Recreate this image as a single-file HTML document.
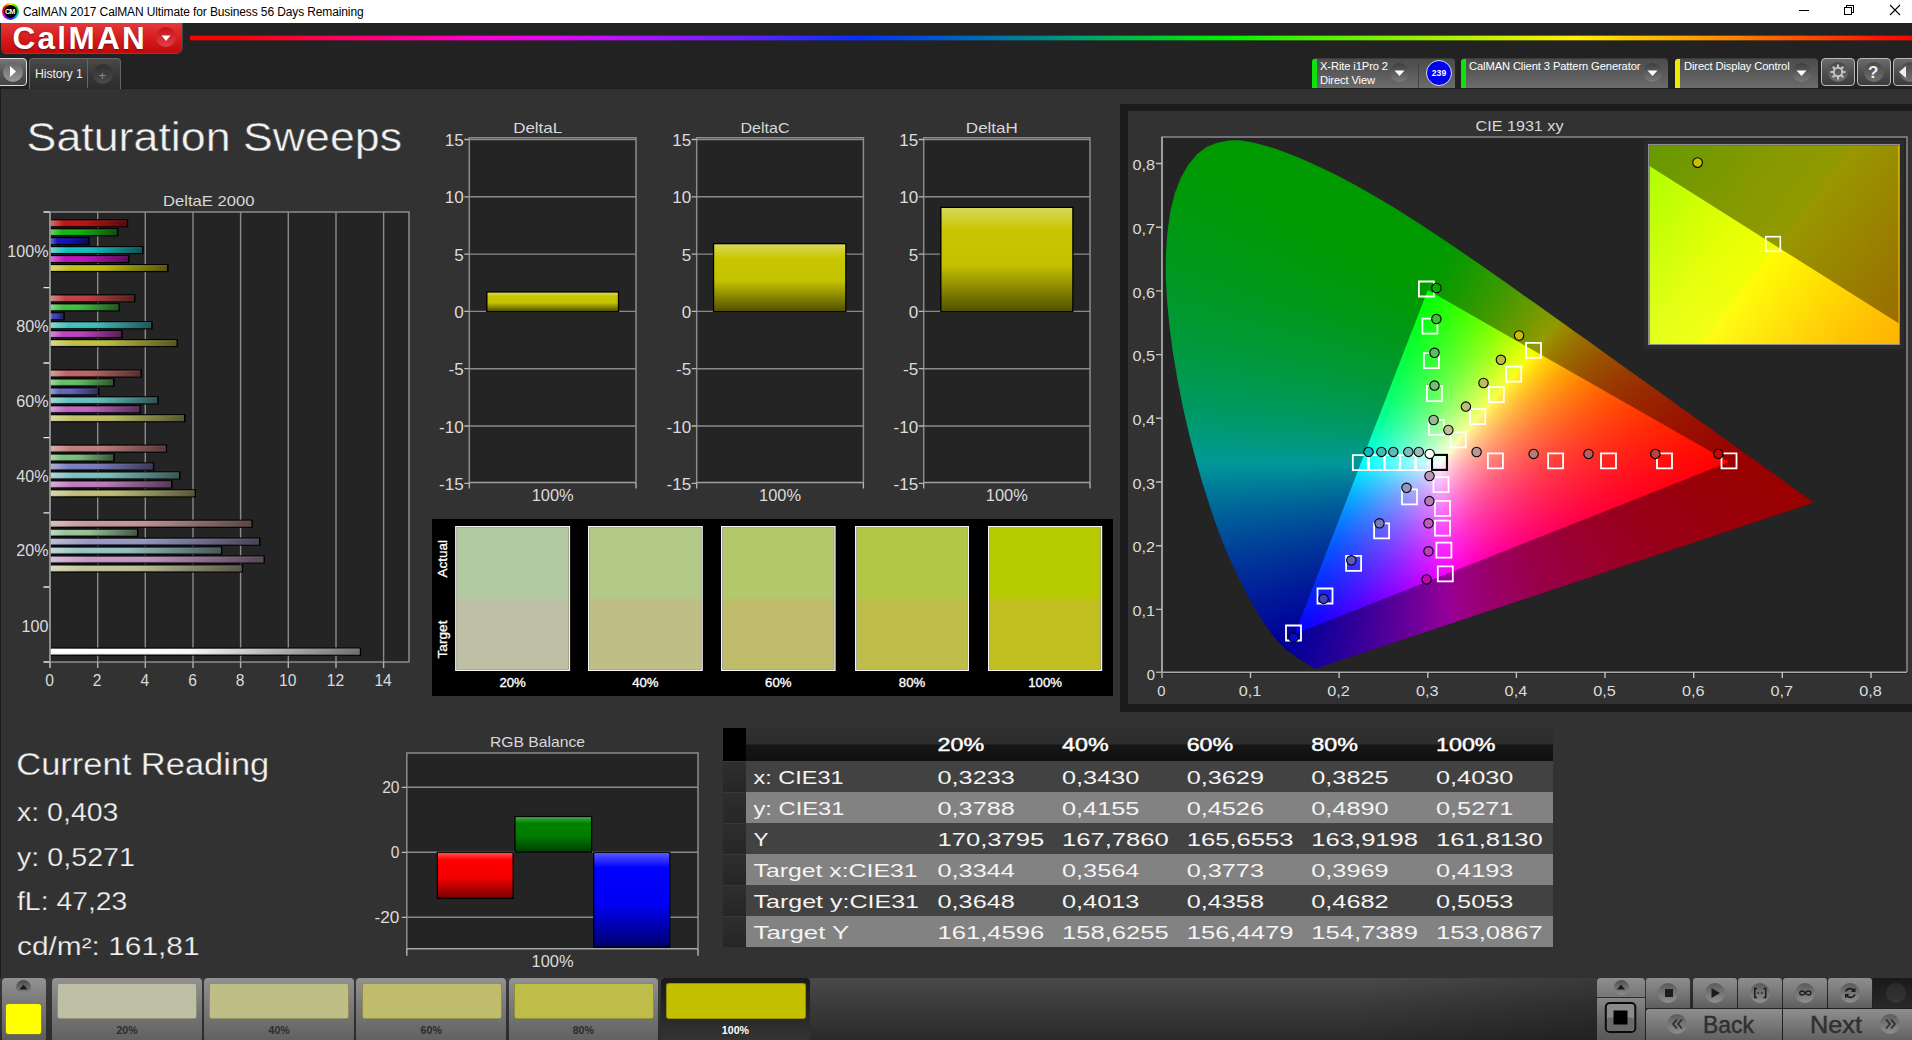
<!DOCTYPE html><html><head><meta charset="utf-8"><title>CalMAN</title><style>
*{box-sizing:border-box;margin:0;padding:0}
html,body{width:1912px;height:1040px;overflow:hidden;background:#323232;font-family:"Liberation Sans",sans-serif;color:#e4e4e4}
.abs{position:absolute}
#titlebar{position:absolute;left:0;top:0;width:1912px;height:23px;background:#fff;color:#000;font-size:12px}
#toolbar{position:absolute;left:0;top:23px;width:1912px;height:66px;background:#222;border-bottom:1px solid #1d1d1d}
#main{position:absolute;left:0;top:89px;width:1912px;height:889px;background:#323232;border-left:1px solid #1c1c1c}
#bottom{position:absolute;left:0;top:978px;width:1912px;height:62px;background:#1e1e1e}
svg{position:absolute;left:0;top:0;overflow:visible}
svg text{font-family:"Liberation Sans",sans-serif}
.t{position:absolute;white-space:nowrap;line-height:1}
</style></head><body>
<div id="titlebar"></div><div id="toolbar"></div><div id="main"></div><div id="bottom"></div>
<!-- p_top -->
<div class="abs" style="left:2px;top:3px;width:17px;height:17px;border-radius:50%;background:conic-gradient(#ff0,#0c0,#0cc,#22f,#c0c,#f00,#ff0)"></div>
<div class="abs" style="left:4px;top:5px;width:13px;height:13px;border-radius:50%;background:#000"></div>
<div class="t" style="left:5px;top:8px;font-size:7px;font-weight:bold;color:#fff;letter-spacing:-0.5px">CM</div>
<div class="t" style="left:23px;top:6px;font-size:12px;color:#000;letter-spacing:-0.12px">CalMAN 2017 CalMAN Ultimate for Business 56 Days Remaining</div>
<svg width="1912" height="23"><g stroke="#000" stroke-width="1" fill="none" shape-rendering="crispEdges">
<path d="M1799 10.5H1809"/><path d="M1844.5 7.5H1851.5V14.5H1844.5Z"/><path d="M1846.5 7.5V5.5H1853.5V12.5H1851.5"/></g>
<g stroke="#000" stroke-width="1.1" fill="none"><path d="M1890 5L1900 15M1900 5L1890 15"/></g></svg>
<div class="abs" style="left:1px;top:23px;width:181px;height:30px;border-radius:0 0 5px 5px;background:linear-gradient(#e23a3c,#d61a1c 55%,#c00a0c);box-shadow:0 1px 0 #555, 1px 0 0 #444"></div>
<div class="t" style="left:12.5px;top:23px;font-size:31.5px;font-weight:bold;color:#fff;letter-spacing:2.3px;text-shadow:0 1px 2px rgba(0,0,0,.4)">CalMAN</div>
<div class="abs" style="left:156px;top:27px;width:20px;height:20px;border-radius:50%;background:linear-gradient(#c8101a,#e04046)"></div>
<svg width="200" height="60"><path d="M161.5 35.5H170.5L166 41Z" fill="#fff"/></svg>
<div class="abs" style="left:190px;top:35px;width:1722px;height:6px;background:linear-gradient(90deg,#ff0000 0,#ff0000 40px,#ff0078 180px,#ff00d8 300px,#c010ff 420px,#6020ff 560px,#0030ff 670px,#0060c0 770px,#008a8a 855px,#00c040 950px,#00f000 1035px,#60f000 1150px,#c0f000 1290px,#fff000 1385px,#ffb000 1480px,#ff6000 1590px,#ff1000 1700px,#ff0000 1722px)"></div>
<div class="abs" style="left:190px;top:35px;width:1722px;height:6px;background:linear-gradient(#222 0,rgba(34,34,34,0) 1.5px,rgba(34,34,34,0) 4.5px,#222 6px)"></div>
<div class="abs" style="left:-3px;top:58px;width:30px;height:28px;border-radius:4px;border:1px solid #ddd;background:linear-gradient(#777,#555 50%,#444)"></div>
<div class="abs" style="left:3px;top:62px;width:20px;height:20px;border-radius:50%;background:linear-gradient(#666,#999)"></div>
<svg width="60" height="100"><path d="M10 66V77L16 71.5Z" fill="#fff"/></svg>
<div class="abs" style="left:29px;top:58px;width:92px;height:31px;border-radius:4px 4px 0 0;border:1px solid #666;border-bottom:none;background:linear-gradient(#4a4a4a,#353535 60%,#2c2c2c)"></div>
<div class="abs" style="left:86.5px;top:59px;width:1px;height:29px;background:#666"></div>
<div class="t" style="left:35px;top:68px;font-size:12.3px;color:#eee;letter-spacing:-0.1px">History 1</div>
<div class="abs" style="left:93px;top:64px;width:20px;height:20px;border-radius:50%;background:linear-gradient(#303030,#4a4a4a)"></div>
<div class="t" style="left:98.5px;top:68.5px;font-size:13px;color:#888">+</div>
<div class="abs" style="left:1311.6px;top:58px;width:143.4px;height:30px;border-radius:4px 4px 0 0;background:linear-gradient(#4c4c4c,#5a5a5a 50%,#6c6c6c);border-top:1px solid #3c3c3c"></div><div class="abs" style="left:1311.6px;top:59px;width:5px;height:29px;border-radius:3px 0 0 0;background:#0ce40c"></div><div class="t" style="left:1320px;top:61px;font-size:11.2px;color:#fff;letter-spacing:-0.12px">X-Rite i1Pro 2</div><div class="t" style="left:1320px;top:75px;font-size:11.2px;color:#fff;letter-spacing:-0.12px">Direct View</div><div class="abs" style="left:1390px;top:63px;width:19px;height:19px;border-radius:50%;background:linear-gradient(#3e3e3e,#7a7a7a)"></div><svg width="1912" height="100"><path d="M1394.5 70.5H1404.5L1399.5 76Z" fill="#fff"/></svg>
<div class="abs" style="left:1418px;top:61px;width:1px;height:27px;background:#444"></div>
<div class="abs" style="left:1426px;top:60px;width:26px;height:26px;border-radius:50%;background:#0000f0;border:1px solid #ddd"></div><div class="t" style="left:1431px;top:69px;font-size:8.6px;font-weight:bold;color:#fff;width:16px;text-align:center">239</div>
<div class="abs" style="left:1460.6px;top:58px;width:207.6px;height:30px;border-radius:4px 4px 0 0;background:linear-gradient(#4c4c4c,#5a5a5a 50%,#6c6c6c);border-top:1px solid #3c3c3c"></div><div class="abs" style="left:1460.6px;top:59px;width:5px;height:29px;border-radius:3px 0 0 0;background:#0ce40c"></div><div class="t" style="left:1469px;top:61px;font-size:11.2px;color:#fff;letter-spacing:-0.12px">CalMAN Client 3 Pattern Generator</div><div class="abs" style="left:1643px;top:63px;width:19px;height:19px;border-radius:50%;background:linear-gradient(#3e3e3e,#7a7a7a)"></div><svg width="1912" height="100"><path d="M1647.5 70.5H1657.5L1652.5 76Z" fill="#fff"/></svg>
<div class="abs" style="left:1675.0px;top:58px;width:143.0px;height:30px;border-radius:4px 4px 0 0;background:linear-gradient(#4c4c4c,#5a5a5a 50%,#6c6c6c);border-top:1px solid #3c3c3c"></div><div class="abs" style="left:1675.0px;top:59px;width:5px;height:29px;border-radius:3px 0 0 0;background:#ecec00"></div><div class="t" style="left:1684px;top:61px;font-size:11.2px;color:#fff;letter-spacing:-0.12px">Direct Display Control</div><div class="abs" style="left:1792px;top:63px;width:19px;height:19px;border-radius:50%;background:linear-gradient(#3e3e3e,#7a7a7a)"></div><svg width="1912" height="100"><path d="M1796.5 70.5H1806.5L1801.5 76Z" fill="#fff"/></svg>
<div class="abs" style="left:1821px;top:58px;width:34px;height:28px;border-radius:4px;border:1px solid #bbb;background:linear-gradient(#6c6c6c,#505050 50%,#3c3c3c)"></div>
<div class="abs" style="left:1828px;top:62px;width:20px;height:20px;border-radius:50%;background:linear-gradient(#484848,#707070)"></div>
<div class="abs" style="left:1857px;top:58px;width:34px;height:28px;border-radius:4px;border:1px solid #bbb;background:linear-gradient(#6c6c6c,#505050 50%,#3c3c3c)"></div>
<div class="abs" style="left:1864px;top:62px;width:20px;height:20px;border-radius:50%;background:linear-gradient(#484848,#707070)"></div>
<div class="abs" style="left:1893px;top:58px;width:34px;height:28px;border-radius:4px;border:1px solid #bbb;background:linear-gradient(#6c6c6c,#505050 50%,#3c3c3c)"></div>
<div class="abs" style="left:1900px;top:62px;width:20px;height:20px;border-radius:50%;background:linear-gradient(#484848,#707070)"></div>
<svg width="1912" height="100"><g transform="translate(1838,72)"><circle r="4.2" fill="none" stroke="#c6c6c6" stroke-width="1.9"/><g stroke="#c6c6c6" stroke-width="2.1">
<path d="M0 -7.5V-4.5M0 7.5V4.5M-7.500 0H-4.5M7.5 0H4.5M-5.3 -5.3L-3.2 -3.2M5.3 5.3L3.2 3.2M-5.3 5.3L-3.2 3.2M5.3 -5.3L3.2 -3.2"/></g></g>
<path d="M1906 66V78L1899 72Z" fill="#eee"/></svg>
<div class="t" style="left:1868px;top:64px;font-size:17px;font-weight:bold;color:#eee">?</div>
<!-- p_deltae -->
<svg width="1912" height="1040">
<defs><linearGradient id="bg" x1="0" x2="1" y1="0" y2="0"><stop offset="0" stop-color="#fff" stop-opacity=".38"/><stop offset=".18" stop-color="#fff" stop-opacity="0"/><stop offset=".45" stop-color="#000" stop-opacity=".03"/><stop offset="1" stop-color="#000" stop-opacity=".56"/></linearGradient>
<linearGradient id="bgv" x1="0" x2="0" y1="0" y2="1"><stop offset="0" stop-color="#fff" stop-opacity=".06"/><stop offset=".5" stop-color="#fff" stop-opacity="0"/><stop offset="1" stop-color="#000" stop-opacity=".1"/></linearGradient></defs>
<rect x="50.0" y="212" width="359.0" height="450" fill="#242424"/>
<path d="M97.7 212 V662 M145.3 212 V662 M193.0 212 V662 M240.6 212 V662 M288.3 212 V662 M336.0 212 V662 M383.6 212 V662" stroke="#8a8a8a" stroke-width="1.4" fill="none"/>
<path d="M50.0 212H409V662H50.0" stroke="#8c8c8c" stroke-width="1.5" fill="none"/>
<path d="M43.5 212H50.0 M43.5 287.7H50.0 M43.5 363H50.0 M43.5 437.6H50.0 M43.5 512.8H50.0 M43.5 587H50.0 M43.5 662H50.0" stroke="#e8e8e8" stroke-width="1.3" fill="none"/>
<path d="M50.0 662V668 M97.7 662V668 M145.3 662V668 M193.0 662V668 M240.6 662V668 M288.3 662V668 M336.0 662V668 M383.6 662V668" stroke="#b0b0b0" stroke-width="1.4" fill="none"/>
<rect x="50.0" y="219.20" width="78.2" height="8.2" fill="#000"/>
<rect x="50.5" y="220.40" width="76.1" height="5.8" fill="#c01010"/>
<rect x="50.5" y="220.40" width="76.1" height="5.8" fill="url(#bg)"/>
<rect x="50.5" y="220.40" width="76.1" height="5.8" fill="url(#bgv)"/>
<rect x="50.0" y="228.15" width="68.5" height="8.2" fill="#000"/>
<rect x="50.5" y="229.35" width="66.4" height="5.8" fill="#10b410"/>
<rect x="50.5" y="229.35" width="66.4" height="5.8" fill="url(#bg)"/>
<rect x="50.5" y="229.35" width="66.4" height="5.8" fill="url(#bgv)"/>
<rect x="50.0" y="237.10" width="39.8" height="8.2" fill="#000"/>
<rect x="50.5" y="238.30" width="37.7" height="5.8" fill="#1010c0"/>
<rect x="50.5" y="238.30" width="37.7" height="5.8" fill="url(#bg)"/>
<rect x="50.5" y="238.30" width="37.7" height="5.8" fill="url(#bgv)"/>
<rect x="50.0" y="246.05" width="93.5" height="8.2" fill="#000"/>
<rect x="50.5" y="247.25" width="91.4" height="5.8" fill="#10c0c0"/>
<rect x="50.5" y="247.25" width="91.4" height="5.8" fill="url(#bg)"/>
<rect x="50.5" y="247.25" width="91.4" height="5.8" fill="url(#bgv)"/>
<rect x="50.0" y="255.00" width="79.6" height="8.2" fill="#000"/>
<rect x="50.5" y="256.20" width="77.5" height="5.8" fill="#c010c0"/>
<rect x="50.5" y="256.20" width="77.5" height="5.8" fill="url(#bg)"/>
<rect x="50.5" y="256.20" width="77.5" height="5.8" fill="url(#bgv)"/>
<rect x="50.0" y="263.95" width="118.6" height="8.2" fill="#000"/>
<rect x="50.5" y="265.15" width="116.5" height="5.8" fill="#c0c010"/>
<rect x="50.5" y="265.15" width="116.5" height="5.8" fill="url(#bg)"/>
<rect x="50.5" y="265.15" width="116.5" height="5.8" fill="url(#bgv)"/>
<rect x="50.0" y="294.30" width="85.4" height="8.2" fill="#000"/>
<rect x="50.5" y="295.50" width="83.3" height="5.8" fill="#c04040"/>
<rect x="50.5" y="295.50" width="83.3" height="5.8" fill="url(#bg)"/>
<rect x="50.5" y="295.50" width="83.3" height="5.8" fill="url(#bgv)"/>
<rect x="50.0" y="303.25" width="69.9" height="8.2" fill="#000"/>
<rect x="50.5" y="304.45" width="67.8" height="5.8" fill="#40c040"/>
<rect x="50.5" y="304.45" width="67.8" height="5.8" fill="url(#bg)"/>
<rect x="50.5" y="304.45" width="67.8" height="5.8" fill="url(#bgv)"/>
<rect x="50.0" y="312.20" width="14.8" height="8.2" fill="#000"/>
<rect x="50.5" y="313.40" width="12.7" height="5.8" fill="#4040c0"/>
<rect x="50.5" y="313.40" width="12.7" height="5.8" fill="url(#bg)"/>
<rect x="50.5" y="313.40" width="12.7" height="5.8" fill="url(#bgv)"/>
<rect x="50.0" y="321.15" width="102.7" height="8.2" fill="#000"/>
<rect x="50.5" y="322.35" width="100.6" height="5.8" fill="#40c0c0"/>
<rect x="50.5" y="322.35" width="100.6" height="5.8" fill="url(#bg)"/>
<rect x="50.5" y="322.35" width="100.6" height="5.8" fill="url(#bgv)"/>
<rect x="50.0" y="330.10" width="72.7" height="8.2" fill="#000"/>
<rect x="50.5" y="331.30" width="70.6" height="5.8" fill="#c040c0"/>
<rect x="50.5" y="331.30" width="70.6" height="5.8" fill="url(#bg)"/>
<rect x="50.5" y="331.30" width="70.6" height="5.8" fill="url(#bgv)"/>
<rect x="50.0" y="339.05" width="127.9" height="8.2" fill="#000"/>
<rect x="50.5" y="340.25" width="125.8" height="5.8" fill="#c0c040"/>
<rect x="50.5" y="340.25" width="125.8" height="5.8" fill="url(#bg)"/>
<rect x="50.5" y="340.25" width="125.8" height="5.8" fill="url(#bgv)"/>
<rect x="50.0" y="369.40" width="91.8" height="8.2" fill="#000"/>
<rect x="50.5" y="370.60" width="89.7" height="5.8" fill="#c06464"/>
<rect x="50.5" y="370.60" width="89.7" height="5.8" fill="url(#bg)"/>
<rect x="50.5" y="370.60" width="89.7" height="5.8" fill="url(#bgv)"/>
<rect x="50.0" y="378.35" width="64.6" height="8.2" fill="#000"/>
<rect x="50.5" y="379.55" width="62.5" height="5.8" fill="#64c064"/>
<rect x="50.5" y="379.55" width="62.5" height="5.8" fill="url(#bg)"/>
<rect x="50.5" y="379.55" width="62.5" height="5.8" fill="url(#bgv)"/>
<rect x="50.0" y="387.30" width="49.4" height="8.2" fill="#000"/>
<rect x="50.5" y="388.50" width="47.3" height="5.8" fill="#6464c0"/>
<rect x="50.5" y="388.50" width="47.3" height="5.8" fill="url(#bg)"/>
<rect x="50.5" y="388.50" width="47.3" height="5.8" fill="url(#bgv)"/>
<rect x="50.0" y="396.25" width="108.7" height="8.2" fill="#000"/>
<rect x="50.5" y="397.45" width="106.6" height="5.8" fill="#64c0c0"/>
<rect x="50.5" y="397.45" width="106.6" height="5.8" fill="url(#bg)"/>
<rect x="50.5" y="397.45" width="106.6" height="5.8" fill="url(#bgv)"/>
<rect x="50.0" y="405.20" width="90.9" height="8.2" fill="#000"/>
<rect x="50.5" y="406.40" width="88.8" height="5.8" fill="#c064c0"/>
<rect x="50.5" y="406.40" width="88.8" height="5.8" fill="url(#bg)"/>
<rect x="50.5" y="406.40" width="88.8" height="5.8" fill="url(#bgv)"/>
<rect x="50.0" y="414.15" width="135.6" height="8.2" fill="#000"/>
<rect x="50.5" y="415.35" width="133.5" height="5.8" fill="#c0c064"/>
<rect x="50.5" y="415.35" width="133.5" height="5.8" fill="url(#bg)"/>
<rect x="50.5" y="415.35" width="133.5" height="5.8" fill="url(#bgv)"/>
<rect x="50.0" y="444.50" width="117.2" height="8.2" fill="#000"/>
<rect x="50.5" y="445.70" width="115.1" height="5.8" fill="#c07c7c"/>
<rect x="50.5" y="445.70" width="115.1" height="5.8" fill="url(#bg)"/>
<rect x="50.5" y="445.70" width="115.1" height="5.8" fill="url(#bgv)"/>
<rect x="50.0" y="453.45" width="64.7" height="8.2" fill="#000"/>
<rect x="50.5" y="454.65" width="62.6" height="5.8" fill="#7cc07c"/>
<rect x="50.5" y="454.65" width="62.6" height="5.8" fill="url(#bg)"/>
<rect x="50.5" y="454.65" width="62.6" height="5.8" fill="url(#bgv)"/>
<rect x="50.0" y="462.40" width="104.3" height="8.2" fill="#000"/>
<rect x="50.5" y="463.60" width="102.2" height="5.8" fill="#7c7cc0"/>
<rect x="50.5" y="463.60" width="102.2" height="5.8" fill="url(#bg)"/>
<rect x="50.5" y="463.60" width="102.2" height="5.8" fill="url(#bgv)"/>
<rect x="50.0" y="471.35" width="130.6" height="8.2" fill="#000"/>
<rect x="50.5" y="472.55" width="128.5" height="5.8" fill="#7cc0c0"/>
<rect x="50.5" y="472.55" width="128.5" height="5.8" fill="url(#bg)"/>
<rect x="50.5" y="472.55" width="128.5" height="5.8" fill="url(#bgv)"/>
<rect x="50.0" y="480.30" width="122.6" height="8.2" fill="#000"/>
<rect x="50.5" y="481.50" width="120.5" height="5.8" fill="#c07cc0"/>
<rect x="50.5" y="481.50" width="120.5" height="5.8" fill="url(#bg)"/>
<rect x="50.5" y="481.50" width="120.5" height="5.8" fill="url(#bgv)"/>
<rect x="50.0" y="489.25" width="146.0" height="8.2" fill="#000"/>
<rect x="50.5" y="490.45" width="143.9" height="5.8" fill="#c0c07c"/>
<rect x="50.5" y="490.45" width="143.9" height="5.8" fill="url(#bg)"/>
<rect x="50.5" y="490.45" width="143.9" height="5.8" fill="url(#bgv)"/>
<rect x="50.0" y="519.60" width="202.8" height="8.2" fill="#000"/>
<rect x="50.5" y="520.80" width="200.7" height="5.8" fill="#c49898"/>
<rect x="50.5" y="520.80" width="200.7" height="5.8" fill="url(#bg)"/>
<rect x="50.5" y="520.80" width="200.7" height="5.8" fill="url(#bgv)"/>
<rect x="50.0" y="528.55" width="88.4" height="8.2" fill="#000"/>
<rect x="50.5" y="529.75" width="86.3" height="5.8" fill="#98c498"/>
<rect x="50.5" y="529.75" width="86.3" height="5.8" fill="url(#bg)"/>
<rect x="50.5" y="529.75" width="86.3" height="5.8" fill="url(#bgv)"/>
<rect x="50.0" y="537.50" width="210.6" height="8.2" fill="#000"/>
<rect x="50.5" y="538.70" width="208.5" height="5.8" fill="#9898c4"/>
<rect x="50.5" y="538.70" width="208.5" height="5.8" fill="url(#bg)"/>
<rect x="50.5" y="538.70" width="208.5" height="5.8" fill="url(#bgv)"/>
<rect x="50.0" y="546.45" width="172.4" height="8.2" fill="#000"/>
<rect x="50.5" y="547.65" width="170.3" height="5.8" fill="#98c4c4"/>
<rect x="50.5" y="547.65" width="170.3" height="5.8" fill="url(#bg)"/>
<rect x="50.5" y="547.65" width="170.3" height="5.8" fill="url(#bgv)"/>
<rect x="50.0" y="555.40" width="214.9" height="8.2" fill="#000"/>
<rect x="50.5" y="556.60" width="212.8" height="5.8" fill="#c498c4"/>
<rect x="50.5" y="556.60" width="212.8" height="5.8" fill="url(#bg)"/>
<rect x="50.5" y="556.60" width="212.8" height="5.8" fill="url(#bgv)"/>
<rect x="50.0" y="564.35" width="193.1" height="8.2" fill="#000"/>
<rect x="50.5" y="565.55" width="191.0" height="5.8" fill="#c4c498"/>
<rect x="50.5" y="565.55" width="191.0" height="5.8" fill="url(#bg)"/>
<rect x="50.5" y="565.55" width="191.0" height="5.8" fill="url(#bgv)"/>
<rect x="50.0" y="647.50" width="311.1" height="8.2" fill="#000"/>
<rect x="50.5" y="648.70" width="309.0" height="5.8" fill="#ffffff"/>
<rect x="50.5" y="648.70" width="309.0" height="5.8" fill="url(#bg)"/>
<rect x="50.5" y="648.70" width="309.0" height="5.8" fill="url(#bgv)"/>
<path d="M50.0 212V668" stroke="#a4a4a4" stroke-width="1.6" fill="none"/>
<text x="48.50" y="256.60" font-size="15.80" text-anchor="end" fill="#dcdcdc" textLength="41.22" lengthAdjust="spacingAndGlyphs">100%</text>
<text x="48.50" y="331.60" font-size="15.80" text-anchor="end" fill="#dcdcdc" textLength="32.26" lengthAdjust="spacingAndGlyphs">80%</text>
<text x="48.50" y="406.60" font-size="15.80" text-anchor="end" fill="#dcdcdc" textLength="32.26" lengthAdjust="spacingAndGlyphs">60%</text>
<text x="48.50" y="481.60" font-size="15.80" text-anchor="end" fill="#dcdcdc" textLength="32.26" lengthAdjust="spacingAndGlyphs">40%</text>
<text x="48.50" y="556.10" font-size="15.80" text-anchor="end" fill="#dcdcdc" textLength="32.26" lengthAdjust="spacingAndGlyphs">20%</text>
<text x="48.50" y="631.60" font-size="15.80" text-anchor="end" fill="#dcdcdc" textLength="26.89" lengthAdjust="spacingAndGlyphs">100</text>
<text x="49.50" y="686.00" font-size="15.60" text-anchor="middle" fill="#dcdcdc">0</text>
<text x="97.16" y="686.00" font-size="15.60" text-anchor="middle" fill="#dcdcdc">2</text>
<text x="144.82" y="686.00" font-size="15.60" text-anchor="middle" fill="#dcdcdc">4</text>
<text x="192.48" y="686.00" font-size="15.60" text-anchor="middle" fill="#dcdcdc">6</text>
<text x="240.14" y="686.00" font-size="15.60" text-anchor="middle" fill="#dcdcdc">8</text>
<text x="287.80" y="686.00" font-size="15.60" text-anchor="middle" fill="#dcdcdc">10</text>
<text x="335.46" y="686.00" font-size="15.60" text-anchor="middle" fill="#dcdcdc">12</text>
<text x="383.12" y="686.00" font-size="15.60" text-anchor="middle" fill="#dcdcdc">14</text>
<text x="208.80" y="206.30" font-size="14.80" text-anchor="middle" fill="#d8d8d8" textLength="91.50" lengthAdjust="spacingAndGlyphs">DeltaE 2000</text>
<text x="26.60" y="151.20" font-size="40.00" text-anchor="start" fill="#f2f2f2" textLength="375.50" lengthAdjust="spacingAndGlyphs" stroke="#323232" stroke-width="0.45">Saturation Sweeps</text>
</svg>
<!-- p_delta3 -->
<svg width="1912" height="1040">
<defs><linearGradient id="yb" x1="0" x2="0" y1="0" y2="1"><stop offset="0" stop-color="#d8d858"/><stop offset=".22" stop-color="#c8c600"/><stop offset=".55" stop-color="#c4c200"/><stop offset="1" stop-color="#525000"/></linearGradient></defs>
<rect x="469.3" y="137.8" width="166.7" height="344.7" fill="#242424"/>
<path d="M469.3 139.5H636 M469.3 196.8H636 M469.3 254.1H636 M469.3 311.4H636 M469.3 368.7H636 M469.3 426.0H636" stroke="#8a8a8a" stroke-width="1.4" fill="none"/>
<path d="M469.3 482.5V137.8H636V482.5" stroke="#8c8c8c" stroke-width="1.5" fill="none"/>
<path d="M469.3 482.5H636" stroke="#a0a0a0" stroke-width="1.5" fill="none"/>
<path d="M464.3 139.5H469.3 M464.3 196.8H469.3 M464.3 254.1H469.3 M464.3 311.4H469.3 M464.3 368.7H469.3 M464.3 426.0H469.3 M464.3 483.3H469.3 M469.3 482.5V488.5 M636 482.5V488.5" stroke="#b8b8b8" stroke-width="1.3" fill="none"/>
<text x="463.80" y="146.10" font-size="15.80" text-anchor="end" fill="#dcdcdc" textLength="18.98" lengthAdjust="spacingAndGlyphs">15</text>
<text x="463.80" y="203.40" font-size="15.80" text-anchor="end" fill="#dcdcdc" textLength="18.98" lengthAdjust="spacingAndGlyphs">10</text>
<text x="463.80" y="260.70" font-size="15.80" text-anchor="end" fill="#dcdcdc" textLength="9.49" lengthAdjust="spacingAndGlyphs">5</text>
<text x="463.80" y="318.00" font-size="15.80" text-anchor="end" fill="#dcdcdc" textLength="9.49" lengthAdjust="spacingAndGlyphs">0</text>
<text x="463.80" y="375.30" font-size="15.80" text-anchor="end" fill="#dcdcdc" textLength="15.17" lengthAdjust="spacingAndGlyphs">-5</text>
<text x="463.80" y="432.60" font-size="15.80" text-anchor="end" fill="#dcdcdc" textLength="24.66" lengthAdjust="spacingAndGlyphs">-10</text>
<text x="463.80" y="489.90" font-size="15.80" text-anchor="end" fill="#dcdcdc" textLength="24.66" lengthAdjust="spacingAndGlyphs">-15</text>
<rect x="486.2" y="291.3" width="132.89999999999995" height="20.7" fill="#000"/>
<rect x="487.5" y="292.6" width="130.29999999999995" height="18.5" fill="url(#yb)"/>
<text x="537.65" y="132.50" font-size="14.80" text-anchor="middle" fill="#d8d8d8" textLength="49.00" lengthAdjust="spacingAndGlyphs">DeltaL</text>
<text x="552.65" y="500.50" font-size="15.60" text-anchor="middle" fill="#dcdcdc" textLength="42.00" lengthAdjust="spacingAndGlyphs">100%</text>
<rect x="696.7" y="137.8" width="166.69999999999993" height="344.7" fill="#242424"/>
<path d="M696.7 139.5H863.4 M696.7 196.8H863.4 M696.7 254.1H863.4 M696.7 311.4H863.4 M696.7 368.7H863.4 M696.7 426.0H863.4" stroke="#8a8a8a" stroke-width="1.4" fill="none"/>
<path d="M696.7 482.5V137.8H863.4V482.5" stroke="#8c8c8c" stroke-width="1.5" fill="none"/>
<path d="M696.7 482.5H863.4" stroke="#a0a0a0" stroke-width="1.5" fill="none"/>
<path d="M691.7 139.5H696.7 M691.7 196.8H696.7 M691.7 254.1H696.7 M691.7 311.4H696.7 M691.7 368.7H696.7 M691.7 426.0H696.7 M691.7 483.3H696.7 M696.7 482.5V488.5 M863.4 482.5V488.5" stroke="#b8b8b8" stroke-width="1.3" fill="none"/>
<text x="691.20" y="146.10" font-size="15.80" text-anchor="end" fill="#dcdcdc" textLength="18.98" lengthAdjust="spacingAndGlyphs">15</text>
<text x="691.20" y="203.40" font-size="15.80" text-anchor="end" fill="#dcdcdc" textLength="18.98" lengthAdjust="spacingAndGlyphs">10</text>
<text x="691.20" y="260.70" font-size="15.80" text-anchor="end" fill="#dcdcdc" textLength="9.49" lengthAdjust="spacingAndGlyphs">5</text>
<text x="691.20" y="318.00" font-size="15.80" text-anchor="end" fill="#dcdcdc" textLength="9.49" lengthAdjust="spacingAndGlyphs">0</text>
<text x="691.20" y="375.30" font-size="15.80" text-anchor="end" fill="#dcdcdc" textLength="15.17" lengthAdjust="spacingAndGlyphs">-5</text>
<text x="691.20" y="432.60" font-size="15.80" text-anchor="end" fill="#dcdcdc" textLength="24.66" lengthAdjust="spacingAndGlyphs">-10</text>
<text x="691.20" y="489.90" font-size="15.80" text-anchor="end" fill="#dcdcdc" textLength="24.66" lengthAdjust="spacingAndGlyphs">-15</text>
<rect x="712.9000000000001" y="243.0" width="133.6" height="69.0" fill="#000"/>
<rect x="714.2" y="244.3" width="131.0" height="66.8" fill="url(#yb)"/>
<text x="765.05" y="132.50" font-size="14.80" text-anchor="middle" fill="#d8d8d8" textLength="49.00" lengthAdjust="spacingAndGlyphs">DeltaC</text>
<text x="780.05" y="500.50" font-size="15.60" text-anchor="middle" fill="#dcdcdc" textLength="42.00" lengthAdjust="spacingAndGlyphs">100%</text>
<rect x="923.7" y="137.8" width="166.29999999999995" height="344.7" fill="#242424"/>
<path d="M923.7 139.5H1090 M923.7 196.8H1090 M923.7 254.1H1090 M923.7 311.4H1090 M923.7 368.7H1090 M923.7 426.0H1090" stroke="#8a8a8a" stroke-width="1.4" fill="none"/>
<path d="M923.7 482.5V137.8H1090V482.5" stroke="#8c8c8c" stroke-width="1.5" fill="none"/>
<path d="M923.7 482.5H1090" stroke="#a0a0a0" stroke-width="1.5" fill="none"/>
<path d="M918.7 139.5H923.7 M918.7 196.8H923.7 M918.7 254.1H923.7 M918.7 311.4H923.7 M918.7 368.7H923.7 M918.7 426.0H923.7 M918.7 483.3H923.7 M923.7 482.5V488.5 M1090 482.5V488.5" stroke="#b8b8b8" stroke-width="1.3" fill="none"/>
<text x="918.20" y="146.10" font-size="15.80" text-anchor="end" fill="#dcdcdc" textLength="18.98" lengthAdjust="spacingAndGlyphs">15</text>
<text x="918.20" y="203.40" font-size="15.80" text-anchor="end" fill="#dcdcdc" textLength="18.98" lengthAdjust="spacingAndGlyphs">10</text>
<text x="918.20" y="260.70" font-size="15.80" text-anchor="end" fill="#dcdcdc" textLength="9.49" lengthAdjust="spacingAndGlyphs">5</text>
<text x="918.20" y="318.00" font-size="15.80" text-anchor="end" fill="#dcdcdc" textLength="9.49" lengthAdjust="spacingAndGlyphs">0</text>
<text x="918.20" y="375.30" font-size="15.80" text-anchor="end" fill="#dcdcdc" textLength="15.17" lengthAdjust="spacingAndGlyphs">-5</text>
<text x="918.20" y="432.60" font-size="15.80" text-anchor="end" fill="#dcdcdc" textLength="24.66" lengthAdjust="spacingAndGlyphs">-10</text>
<text x="918.20" y="489.90" font-size="15.80" text-anchor="end" fill="#dcdcdc" textLength="24.66" lengthAdjust="spacingAndGlyphs">-15</text>
<rect x="940.2" y="206.7" width="133.30000000000004" height="105.3" fill="#000"/>
<rect x="941.5" y="208.0" width="130.70000000000005" height="103.1" fill="url(#yb)"/>
<text x="991.85" y="132.50" font-size="14.80" text-anchor="middle" fill="#d8d8d8" textLength="52.00" lengthAdjust="spacingAndGlyphs">DeltaH</text>
<text x="1006.85" y="500.50" font-size="15.60" text-anchor="middle" fill="#dcdcdc" textLength="42.00" lengthAdjust="spacingAndGlyphs">100%</text>
</svg>
<!-- p_swatch -->
<svg width="1912" height="1040">
<rect x="432" y="519" width="681" height="177" fill="#000"/>
<rect x="455.1" y="526" width="115" height="145" fill="#f4f4f4"/>
<rect x="456.3" y="527.2" width="112.6" height="142.6" fill="#9a9a88"/>
<rect x="457.1" y="528" width="111" height="71" fill="#b2c9a1"/>
<rect x="457.1" y="598.7" width="111" height="70.3" fill="#bfbfa5"/>
<text x="512.60" y="687.30" font-size="13.20" text-anchor="middle" fill="#fff" stroke="#fff" stroke-width="0.35">20%</text>
<rect x="588" y="526" width="114.8" height="145" fill="#f4f4f4"/>
<rect x="589.2" y="527.2" width="112.39999999999999" height="142.6" fill="#9a9a88"/>
<rect x="590" y="528" width="110.8" height="71" fill="#b3c988"/>
<rect x="590" y="598.7" width="110.8" height="70.3" fill="#c0be87"/>
<text x="645.40" y="687.30" font-size="13.20" text-anchor="middle" fill="#fff" stroke="#fff" stroke-width="0.35">40%</text>
<rect x="721" y="526" width="114.6" height="145" fill="#f4f4f4"/>
<rect x="722.2" y="527.2" width="112.19999999999999" height="142.6" fill="#9a9a88"/>
<rect x="723" y="528" width="110.6" height="71" fill="#b2c86a"/>
<rect x="723" y="598.7" width="110.6" height="70.3" fill="#bfbd6b"/>
<text x="778.30" y="687.30" font-size="13.20" text-anchor="middle" fill="#fff" stroke="#fff" stroke-width="0.35">60%</text>
<rect x="855" y="526" width="114" height="145" fill="#f4f4f4"/>
<rect x="856.2" y="527.2" width="111.6" height="142.6" fill="#9a9a88"/>
<rect x="857" y="528" width="110" height="71" fill="#b2c746"/>
<rect x="857" y="598.7" width="110" height="70.3" fill="#bfbd4a"/>
<text x="912.00" y="687.30" font-size="13.20" text-anchor="middle" fill="#fff" stroke="#fff" stroke-width="0.35">80%</text>
<rect x="988" y="526" width="114.2" height="145" fill="#f4f4f4"/>
<rect x="989.2" y="527.2" width="111.8" height="142.6" fill="#9a9a88"/>
<rect x="990" y="528" width="110.2" height="71" fill="#b5ca00"/>
<rect x="990" y="598.7" width="110.2" height="70.3" fill="#c1be1f"/>
<text x="1045.10" y="687.30" font-size="13.20" text-anchor="middle" fill="#fff" stroke="#fff" stroke-width="0.35">100%</text>
<text transform="translate(446.5,577.5) rotate(-90)" font-size="13" fill="#fff" stroke="#fff" stroke-width="0.3" textLength="37.5" lengthAdjust="spacingAndGlyphs">Actual</text>
<text transform="translate(446.5,658.5) rotate(-90)" font-size="13" fill="#fff" stroke="#fff" stroke-width="0.3" textLength="38" lengthAdjust="spacingAndGlyphs">Target</text>
</svg>
<!-- p_cie -->
<div class="abs" style="left:1120px;top:104px;width:792px;height:607.6px;background:#1c1c1c"></div>
<div class="abs" style="left:1128px;top:111px;width:784px;height:593px;background:#323232"></div>
<div class="abs" style="left:1162px;top:137px;width:745px;height:535px;background:#242424"></div>
<div style="position:absolute;left:1162px;top:137px;width:745px;height:536px;overflow:hidden;isolation:isolate;">
<div style="position:absolute;left:0;top:0;width:100%;height:100%;isolation:isolate"><div style="position:absolute;left:0;top:0;width:100%;height:100%;background:conic-gradient(from 0.09deg at 132.77px 497.08px,#ff0000 0.00deg,#ff0000 19.95deg,#ffff00 22.80deg,#ffff00 39.90deg,#ffcc00 42.75deg,#ffa200 45.60deg,#ff8100 48.45deg,#ff6500 51.31deg,#ff4e00 54.16deg,#ff3a00 57.01deg,#ff2900 59.86deg,#ff0c00 65.56deg,#ff0000 68.41deg,#ff0000 108.31deg)"></div><div style="position:absolute;left:0;top:0;width:100%;height:100%;mix-blend-mode:screen;background:conic-gradient(from 79.71deg at 265.75px 153.10px,#000000 0.00deg,#000000 39.53deg,#000007 43.12deg,#000021 53.90deg,#000035 61.09deg,#00004c 68.28deg,#000059 71.87deg,#000078 79.06deg,#00008b 82.65deg,#0000a1 86.25deg,#0000bc 89.84deg,#0000dc 93.43deg,#0000ff 97.03deg,#0000ff 118.59deg,#000000 122.18deg,#000000 136.56deg)"></div></div>
<div style="position:absolute;left:0;top:0;width:100%;height:100%;isolation:isolate;clip-path:polygon(278.0px 327.9px,2853.9px -2732.3px,-2259.5px -5109.1px,-3722.0px 336.7px)"><div style="position:absolute;left:0;top:0;width:100%;height:100%;background:conic-gradient(from 341.14deg at 132.77px 497.08px,#00ff00 0.00deg,#00ff00 39.06deg,#0fff00 41.66deg,#29ff00 44.27deg,#45ff00 46.87deg,#64ff00 49.48deg,#87ff00 52.08deg,#afff00 54.68deg,#ddff00 57.29deg,#ffff00 59.89deg,#ffff00 85.93deg,#00ff00 88.54deg,#00ff00 98.95deg)"></div><div style="position:absolute;left:0;top:0;width:100%;height:100%;mix-blend-mode:screen;background:conic-gradient(from 229.87deg at 567.16px 325.09px,#000000 0.00deg,#000000 17.34deg,#0000ff 20.23deg,#0000ff 37.58deg,#0000f6 40.47deg,#0000c7 43.36deg,#0000a1 46.25deg,#000082 49.14deg,#000068 52.03deg,#000051 54.92deg,#00002c 60.70deg,#00000f 66.48deg,#000002 69.37deg,#000000 72.26deg,#000000 109.84deg)"></div></div>
<div style="position:absolute;left:0;top:0;width:100%;height:100%;isolation:isolate;clip-path:polygon(278.6px 324.0px,-3721.3px 332.8px,-3818.8px 4707.0px,539.0px 4315.5px)"><div style="position:absolute;left:0;top:0;width:100%;height:100%;background:conic-gradient(from 136.27deg at 265.75px 153.10px,#ff00ff 0.00deg,#ff00ff 38.64deg,#ee00ff 41.39deg,#cd00ff 44.15deg,#ae00ff 46.91deg,#7500ff 52.43deg,#3f00ff 57.95deg,#0c00ff 63.47deg,#0000ff 66.23deg,#0000ff 104.87deg)"></div><div style="position:absolute;left:0;top:0;width:100%;height:100%;mix-blend-mode:screen;background:conic-gradient(from 208.40deg at 567.16px 325.09px,#000000 0.00deg,#000000 40.06deg,#002d00 45.40deg,#004700 48.07deg,#006300 50.74deg,#008300 53.41deg,#00a600 56.08deg,#00cf00 58.75deg,#00fe00 61.42deg,#00ff00 90.79deg,#000000 93.46deg,#000000 101.47deg)"></div></div>
</div>
<svg width="1912" height="1040">
<path d="M1161 136h747v538h-747Z M1729.2 462.1 L1427.8 290.1 L1294.8 634.1Z" fill="#000" fill-opacity=".4" fill-rule="evenodd"/>
<path d="M1161 136h747v538h-747Z M1316.7 668.3 L1316.7 668.3 L1316.6 668.4 L1316.5 668.4 L1316.3 668.4 L1316.2 668.4 L1316.0 668.4 L1315.9 668.5 L1315.7 668.5 L1315.4 668.4 L1315.1 668.4 L1314.7 668.3 L1314.3 668.3 L1314.0 668.1 L1313.7 668.0 L1313.4 667.8 L1313.0 667.6 L1312.6 667.4 L1312.1 667.1 L1311.6 666.8 L1311.0 666.4 L1310.4 666.0 L1309.7 665.6 L1308.9 665.1 L1308.1 664.6 L1307.3 664.0 L1306.3 663.4 L1305.2 662.7 L1304.0 662.0 L1302.7 661.1 L1301.2 660.2 L1299.7 659.3 L1298.0 658.2 L1296.3 657.0 L1294.3 655.7 L1292.3 654.3 L1290.1 652.6 L1287.7 650.7 L1285.3 648.7 L1282.5 646.1 L1279.4 642.9 L1276.1 639.2 L1272.4 634.7 L1268.5 629.4 L1264.2 623.4 L1259.6 616.2 L1254.5 607.8 L1249.2 598.2 L1243.3 587.0 L1237.0 574.2 L1230.2 559.9 L1223.3 543.7 L1216.4 525.4 L1209.5 505.3 L1202.6 483.6 L1195.9 459.9 L1189.2 434.5 L1183.2 408.6 L1177.9 382.1 L1173.3 355.0 L1169.7 328.5 L1167.2 302.9 L1165.8 277.9 L1165.9 254.4 L1167.4 232.4 L1170.3 211.8 L1174.7 193.6 L1180.8 178.0 L1188.3 164.7 L1196.9 154.3 L1206.5 147.0 L1217.2 142.7 L1228.3 140.4 L1239.7 140.3 L1251.7 142.3 L1263.6 145.2 L1275.6 148.8 L1287.7 153.3 L1299.5 158.1 L1311.0 163.0 L1322.3 168.2 L1333.4 173.6 L1344.4 179.2 L1355.2 185.0 L1365.9 191.0 L1376.7 197.2 L1387.4 203.6 L1398.0 210.1 L1408.6 216.8 L1419.2 223.6 L1429.8 230.5 L1440.3 237.5 L1450.9 244.6 L1461.4 251.8 L1472.0 259.0 L1482.6 266.3 L1493.2 273.7 L1503.7 281.1 L1514.2 288.5 L1524.7 295.9 L1535.2 303.3 L1545.7 310.8 L1556.1 318.2 L1566.4 325.5 L1576.7 332.9 L1586.9 340.1 L1596.9 347.3 L1606.9 354.5 L1616.7 361.5 L1626.4 368.5 L1636.0 375.3 L1645.4 382.0 L1654.6 388.6 L1663.6 395.0 L1672.3 401.3 L1680.8 407.4 L1689.0 413.3 L1696.9 418.9 L1704.3 424.3 L1711.4 429.3 L1718.2 434.2 L1724.8 438.9 L1731.1 443.4 L1737.0 447.7 L1742.6 451.6 L1747.8 455.3 L1752.6 458.7 L1757.2 462.0 L1761.4 465.0 L1765.3 467.9 L1768.9 470.5 L1772.3 472.9 L1775.4 475.1 L1778.3 477.2 L1781.0 479.1 L1783.5 480.8 L1785.8 482.5 L1787.9 484.0 L1790.0 485.5 L1791.9 486.9 L1793.7 488.2 L1795.4 489.4 L1796.9 490.5 L1798.4 491.6 L1799.8 492.6 L1801.1 493.5 L1802.3 494.3 L1803.3 495.1 L1804.3 495.7 L1805.2 496.4 L1806.0 497.0 L1806.7 497.5 L1807.4 498.0 L1808.0 498.4 L1808.5 498.7 L1808.9 499.0 L1809.5 499.5 L1810.9 500.5 L1812.5 501.7 L1813.7 502.5Z" fill="#242424" fill-rule="evenodd"/>
</svg>
<div class="abs" style="left:1644px;top:139.500px;width:260px;height:209px;background:#2b2b2b"></div>
<div class="abs" style="left:1648px;top:144px;width:252px;height:201px;background:#8e8e8e"></div>
<div style="position:absolute;left:1649.5px;top:145.5px;width:249px;height:198px;overflow:hidden;isolation:isolate;">
<div style="position:absolute;left:0;top:0;width:100%;height:100%;isolation:isolate"><div style="position:absolute;left:0;top:0;width:100%;height:100%;background:conic-gradient(from 357.25deg at -1117.24px 1731.92px,#ff0000 0.00deg,#ff0000 20.09deg,#ffff00 22.96deg,#ffff00 37.32deg,#fffb00 40.19deg,#ffc600 43.06deg,#ff9d00 45.93deg,#ff7d00 48.80deg,#ff6200 51.67deg,#ff4c00 54.54deg,#ff3900 57.41deg,#ff2800 60.28deg,#ff1900 63.15deg,#ff0c00 66.02deg,#ff0100 68.89deg,#ff0000 109.08deg)"></div><div style="position:absolute;left:0;top:0;width:100%;height:100%;mix-blend-mode:screen;background:conic-gradient(from 82.27deg at -425.59px -248.26px,#000000 0.00deg,#000000 38.89deg,#000005 42.43deg,#00001e 53.03deg,#00003c 63.64deg,#000055 70.71deg,#000064 74.25deg,#000075 77.78deg,#000089 81.32deg,#0000a0 84.85deg,#0000bd 88.39deg,#0000e0 91.93deg,#0000ff 95.46deg,#0000ff 116.68deg,#000000 120.21deg,#000000 134.35deg)"></div></div>
<div style="position:absolute;left:0;top:0;width:100%;height:100%;isolation:isolate;clip-path:polygon(-366.0px 747.6px,2055.4px -2436.2px,-3037.8px -4624.7px,-4366.0px 757.4px)"><div style="position:absolute;left:0;top:0;width:100%;height:100%;background:conic-gradient(from 339.25deg at -1117.24px 1731.92px,#00ff00 0.00deg,#00ff00 38.68deg,#0cff00 41.26deg,#27ff00 43.84deg,#45ff00 46.42deg,#66ff00 49.00deg,#8bff00 51.58deg,#b4ff00 54.16deg,#e5ff00 56.74deg,#ffff00 59.32deg,#ffff00 85.11deg,#00ff00 87.68deg,#00ff00 98.00deg)"></div><div style="position:absolute;left:0;top:0;width:100%;height:100%;mix-blend-mode:screen;background:conic-gradient(from 229.86deg at 1142.15px 741.83px,#000000 0.00deg,#000000 14.79deg,#0000ff 17.75deg,#0000ff 38.46deg,#0000e8 41.42deg,#0000bf 44.37deg,#00009d 47.33deg,#000081 50.29deg,#000068 53.25deg,#000053 56.21deg,#000040 59.16deg,#00002f 62.12deg,#000012 68.04deg,#000006 71.00deg,#000000 73.96deg,#000000 112.41deg)"></div></div>
<div style="position:absolute;left:0;top:0;width:100%;height:100%;isolation:isolate;clip-path:polygon(-365.4px 743.7px,-4365.4px 753.5px,-4476.0px 5114.4px,-130.1px 4736.8px)"><div style="position:absolute;left:0;top:0;width:100%;height:100%;background:conic-gradient(from 136.63deg at -425.59px -248.26px,#ff00ff 0.00deg,#ff00ff 37.81deg,#f800ff 40.51deg,#d400ff 43.21deg,#b200ff 45.91deg,#9200ff 48.61deg,#5700ff 54.01deg,#1f00ff 59.42deg,#0500ff 62.12deg,#0000ff 64.82deg,#0000ff 102.63deg)"></div><div style="position:absolute;left:0;top:0;width:100%;height:100%;mix-blend-mode:screen;background:conic-gradient(from 206.34deg at 1142.15px 741.83px,#000000 0.00deg,#000000 38.14deg,#000600 40.86deg,#003100 46.31deg,#006400 51.76deg,#008100 54.49deg,#00a200 57.21deg,#00c700 59.94deg,#00f000 62.66deg,#00ff00 65.38deg,#00ff00 95.35deg,#000000 98.08deg,#000000 103.52deg)"></div></div>
</div>
<svg width="1912" height="1040">
<defs><clipPath id="icl"><rect x="1649.5" y="145.5" width="249" height="198"/></clipPath></defs>
<path d="M1644.5 140.5h259v208h-259Z M2791.6 887.3 L1223.9 -102.8 L532.3 1877.4Z" fill="#000" fill-opacity=".4" fill-rule="evenodd" clip-path="url(#icl)"/>
<rect x="1765.7" y="236.7" width="14.6" height="14.6" fill="none" stroke="#fff" stroke-width="1.6"/>
<circle cx="1697.6" cy="162.6" r="4.8" fill="#c8c000" stroke="#000" stroke-width="1.1"/>
<path d="M1162 672V137H1907V672" stroke="#8c8c8c" stroke-width="1.5" fill="none"/>
<path d="M1162 137V678M1156 672.2H1907" stroke="#a8a8a8" stroke-width="1.6" fill="none"/>
<path d="M1250.5 672V678 M1156 609.4H1162 M1339.1 672V678 M1156 545.7H1162 M1427.8 672V678 M1156 482.0H1162 M1516.4 672V678 M1156 418.3H1162 M1605.0 672V678 M1156 354.6H1162 M1693.7 672V678 M1156 290.9H1162 M1782.3 672V678 M1156 227.2H1162 M1871.0 672V678 M1156 163.5H1162" stroke="#c0c0c0" stroke-width="1.4" fill="none"/>
<text x="1161.30" y="695.50" font-size="14.80" text-anchor="middle" fill="#dcdcdc">0</text>
<text x="1155.00" y="679.80" font-size="14.80" text-anchor="end" fill="#dcdcdc">0</text>
<text x="1249.95" y="695.50" font-size="14.80" text-anchor="middle" fill="#dcdcdc" textLength="22.60" lengthAdjust="spacingAndGlyphs">0,1</text>
<text x="1155.00" y="616.10" font-size="14.80" text-anchor="end" fill="#dcdcdc" textLength="22.60" lengthAdjust="spacingAndGlyphs">0,1</text>
<text x="1338.60" y="695.50" font-size="14.80" text-anchor="middle" fill="#dcdcdc" textLength="22.60" lengthAdjust="spacingAndGlyphs">0,2</text>
<text x="1155.00" y="552.40" font-size="14.80" text-anchor="end" fill="#dcdcdc" textLength="22.60" lengthAdjust="spacingAndGlyphs">0,2</text>
<text x="1427.25" y="695.50" font-size="14.80" text-anchor="middle" fill="#dcdcdc" textLength="22.60" lengthAdjust="spacingAndGlyphs">0,3</text>
<text x="1155.00" y="488.70" font-size="14.80" text-anchor="end" fill="#dcdcdc" textLength="22.60" lengthAdjust="spacingAndGlyphs">0,3</text>
<text x="1515.90" y="695.50" font-size="14.80" text-anchor="middle" fill="#dcdcdc" textLength="22.60" lengthAdjust="spacingAndGlyphs">0,4</text>
<text x="1155.00" y="425.00" font-size="14.80" text-anchor="end" fill="#dcdcdc" textLength="22.60" lengthAdjust="spacingAndGlyphs">0,4</text>
<text x="1604.55" y="695.50" font-size="14.80" text-anchor="middle" fill="#dcdcdc" textLength="22.60" lengthAdjust="spacingAndGlyphs">0,5</text>
<text x="1155.00" y="361.30" font-size="14.80" text-anchor="end" fill="#dcdcdc" textLength="22.60" lengthAdjust="spacingAndGlyphs">0,5</text>
<text x="1693.20" y="695.50" font-size="14.80" text-anchor="middle" fill="#dcdcdc" textLength="22.60" lengthAdjust="spacingAndGlyphs">0,6</text>
<text x="1155.00" y="297.60" font-size="14.80" text-anchor="end" fill="#dcdcdc" textLength="22.60" lengthAdjust="spacingAndGlyphs">0,6</text>
<text x="1781.85" y="695.50" font-size="14.80" text-anchor="middle" fill="#dcdcdc" textLength="22.60" lengthAdjust="spacingAndGlyphs">0,7</text>
<text x="1155.00" y="233.90" font-size="14.80" text-anchor="end" fill="#dcdcdc" textLength="22.60" lengthAdjust="spacingAndGlyphs">0,7</text>
<text x="1870.50" y="695.50" font-size="14.80" text-anchor="middle" fill="#dcdcdc" textLength="22.60" lengthAdjust="spacingAndGlyphs">0,8</text>
<text x="1155.00" y="170.20" font-size="14.80" text-anchor="end" fill="#dcdcdc" textLength="22.60" lengthAdjust="spacingAndGlyphs">0,8</text>
<text x="1519.50" y="131.00" font-size="14.80" text-anchor="middle" fill="#d8d8d8" textLength="88.00" lengthAdjust="spacingAndGlyphs">CIE 1931 xy</text>
<path d="M1487.9 453.4h15v15h-15ZM1548.1 453.4h15v15h-15ZM1601.0 453.4h15v15h-15ZM1657.0 453.4h15v15h-15ZM1721.5 453.4h15v15h-15ZM1428.9 419.8h15v15h-15ZM1426.9 386.1h15v15h-15ZM1423.9 353.1h15v15h-15ZM1422.4 318.6h15v15h-15ZM1418.9 281.5h15v15h-15ZM1402.0 489.3h15v15h-15ZM1374.1 523.4h15v15h-15ZM1346.1 555.9h15v15h-15ZM1317.5 588.5h15v15h-15ZM1286.0 625.5h15v15h-15ZM1416.2 455.1h15v15h-15ZM1400.3 455.1h15v15h-15ZM1384.8 455.1h15v15h-15ZM1369.0 455.1h15v15h-15ZM1352.8 455.1h15v15h-15ZM1433.5 477.2h15v15h-15ZM1435.0 500.9h15v15h-15ZM1435.0 520.6h15v15h-15ZM1436.4 542.6h15v15h-15ZM1437.8 566.3h15v15h-15ZM1450.7 432.4h15v15h-15ZM1470.2 409.2h15v15h-15ZM1488.8 387.2h15v15h-15ZM1506.2 366.6h15v15h-15ZM1526.0 342.9h15v15h-15Z" fill="none" stroke="#fff" stroke-width="1.8"/>
<rect x="1432" y="454.9" width="15" height="15" fill="none" stroke="#000" stroke-width="2.1"/>
<circle cx="1476.6" cy="452.0" r="4.7" fill="#bc9696" stroke="#000" stroke-width="1.1"/>
<circle cx="1533.6" cy="453.9" r="4.7" fill="#bc7878" stroke="#000" stroke-width="1.1"/>
<circle cx="1588.5" cy="453.9" r="4.7" fill="#bc5c5c" stroke="#000" stroke-width="1.1"/>
<circle cx="1655.4" cy="453.9" r="4.7" fill="#bc4040" stroke="#000" stroke-width="1.1"/>
<circle cx="1718.4" cy="453.9" r="4.7" fill="#c00808" stroke="#000" stroke-width="1.1"/>
<circle cx="1433.6" cy="420.0" r="4.7" fill="#96bc96" stroke="#000" stroke-width="1.1"/>
<circle cx="1434.5" cy="385.6" r="4.7" fill="#78bc78" stroke="#000" stroke-width="1.1"/>
<circle cx="1434.5" cy="352.8" r="4.7" fill="#5cbc5c" stroke="#000" stroke-width="1.1"/>
<circle cx="1436.4" cy="319.0" r="4.7" fill="#40bc40" stroke="#000" stroke-width="1.1"/>
<circle cx="1436.4" cy="288.0" r="4.7" fill="#08a808" stroke="#000" stroke-width="1.1"/>
<circle cx="1406.5" cy="487.8" r="4.7" fill="#9696bc" stroke="#000" stroke-width="1.1"/>
<circle cx="1379.5" cy="523.3" r="4.7" fill="#7878bc" stroke="#000" stroke-width="1.1"/>
<circle cx="1351.3" cy="560.3" r="4.7" fill="#5c5cbc" stroke="#000" stroke-width="1.1"/>
<circle cx="1323.6" cy="598.9" r="4.7" fill="#4040bc" stroke="#000" stroke-width="1.1"/>
<circle cx="1293.5" cy="637.3" r="4.7" fill="#0808c8" stroke="#000" stroke-width="1.1"/>
<circle cx="1418.8" cy="451.9" r="4.7" fill="#96bcbc" stroke="#000" stroke-width="1.1"/>
<circle cx="1408.3" cy="451.9" r="4.7" fill="#78bcbc" stroke="#000" stroke-width="1.1"/>
<circle cx="1393.3" cy="451.9" r="4.7" fill="#5cbcbc" stroke="#000" stroke-width="1.1"/>
<circle cx="1381.4" cy="451.9" r="4.7" fill="#40bcbc" stroke="#000" stroke-width="1.1"/>
<circle cx="1368.5" cy="451.9" r="4.7" fill="#10b8c0" stroke="#000" stroke-width="1.1"/>
<circle cx="1429.5" cy="476.0" r="4.7" fill="#bc96bc" stroke="#000" stroke-width="1.1"/>
<circle cx="1429.4" cy="501.1" r="4.7" fill="#bc78bc" stroke="#000" stroke-width="1.1"/>
<circle cx="1428.5" cy="523.3" r="4.7" fill="#bc5cbc" stroke="#000" stroke-width="1.1"/>
<circle cx="1428.5" cy="551.3" r="4.7" fill="#bc40bc" stroke="#000" stroke-width="1.1"/>
<circle cx="1426.6" cy="579.4" r="4.7" fill="#c008b0" stroke="#000" stroke-width="1.1"/>
<circle cx="1448.4" cy="430.0" r="4.7" fill="#bcbc96" stroke="#000" stroke-width="1.1"/>
<circle cx="1465.9" cy="406.6" r="4.7" fill="#bcbc78" stroke="#000" stroke-width="1.1"/>
<circle cx="1483.5" cy="383.0" r="4.7" fill="#bcbc5c" stroke="#000" stroke-width="1.1"/>
<circle cx="1500.9" cy="359.8" r="4.7" fill="#bcbc40" stroke="#000" stroke-width="1.1"/>
<circle cx="1519.1" cy="335.5" r="4.7" fill="#c8c000" stroke="#000" stroke-width="1.1"/>
<circle cx="1429.7" cy="453.9" r="4.7" fill="#fff" stroke="#000" stroke-width="1.1"/>
</svg>
<!-- p_reading -->
<svg width="1912" height="1040">
<defs>
<linearGradient id="gr" x1="0" x2="0" y1="0" y2="1"><stop offset="0" stop-color="#ff5050"/><stop offset=".16" stop-color="#ff0000"/><stop offset=".55" stop-color="#f40000"/><stop offset="1" stop-color="#780000"/></linearGradient>
<linearGradient id="gg" x1="0" x2="0" y1="0" y2="1"><stop offset="0" stop-color="#40a840"/><stop offset=".18" stop-color="#008200"/><stop offset=".55" stop-color="#007c00"/><stop offset="1" stop-color="#004000"/></linearGradient>
<linearGradient id="gb" x1="0" x2="0" y1="0" y2="1"><stop offset="0" stop-color="#5858ff"/><stop offset=".16" stop-color="#0000ff"/><stop offset=".55" stop-color="#0000f4"/><stop offset="1" stop-color="#000070"/></linearGradient></defs>
<text x="16.30" y="775.30" font-size="31.00" text-anchor="start" fill="#f2f2f2" textLength="253.00" lengthAdjust="spacingAndGlyphs" stroke="#323232" stroke-width="0.3">Current Reading</text>
<text x="17.00" y="821.30" font-size="25.60" text-anchor="start" fill="#f2f2f2" textLength="101.50" lengthAdjust="spacingAndGlyphs" stroke="#323232" stroke-width="0.25">x: 0,403</text>
<text x="17.00" y="865.80" font-size="25.60" text-anchor="start" fill="#f2f2f2" textLength="118.00" lengthAdjust="spacingAndGlyphs" stroke="#323232" stroke-width="0.25">y: 0,5271</text>
<text x="17.00" y="910.20" font-size="25.60" text-anchor="start" fill="#f2f2f2" textLength="110.30" lengthAdjust="spacingAndGlyphs" stroke="#323232" stroke-width="0.25">fL: 47,23</text>
<text x="17.00" y="954.70" font-size="25.60" text-anchor="start" fill="#f2f2f2" textLength="182.50" lengthAdjust="spacingAndGlyphs" stroke="#323232" stroke-width="0.25">cd/m²: 161,81</text>
<rect x="406.8" y="752.9" width="291.2" height="195.80000000000007" fill="#242424"/>
<path d="M406.8 787.3H698 M406.8 852.3H698 M406.8 917.3H698" stroke="#8a8a8a" stroke-width="1.4" fill="none"/>
<path d="M406.8 948.7V752.9H698V948.7" stroke="#8c8c8c" stroke-width="1.5" fill="none"/>
<path d="M406.8 948.7H698" stroke="#a8a8a8" stroke-width="1.5" fill="none"/>
<path d="M401.8 787.3H406.8 M401.8 852.3H406.8 M401.8 917.3H406.8 M406.8 948.7V955.7 M698 948.7V955.7" stroke="#c0c0c0" stroke-width="1.3" fill="none"/>
<rect x="436.7" y="851.7" width="77.0" height="47.4" fill="#000"/>
<rect x="437.9" y="852.9" width="74.6" height="44.8" fill="url(#gr)"/>
<rect x="514.4" y="815.9" width="77.8" height="37.0" fill="#000"/>
<rect x="515.6" y="817.1" width="75.4" height="34.4" fill="url(#gg)"/>
<rect x="593.1" y="851.7" width="77.3" height="96.1" fill="#000"/>
<rect x="594.3" y="852.9" width="74.9" height="93.5" fill="url(#gb)"/>
<text x="399.50" y="792.90" font-size="15.60" text-anchor="end" fill="#dcdcdc">20</text>
<text x="399.50" y="857.90" font-size="15.60" text-anchor="end" fill="#dcdcdc">0</text>
<text x="399.50" y="922.90" font-size="15.60" text-anchor="end" fill="#dcdcdc" textLength="25.00" lengthAdjust="spacingAndGlyphs">-20</text>
<text x="552.60" y="966.50" font-size="15.60" text-anchor="middle" fill="#dcdcdc" textLength="42.00" lengthAdjust="spacingAndGlyphs">100%</text>
<text x="537.50" y="747.00" font-size="14.80" text-anchor="middle" fill="#d8d8d8" textLength="95.00" lengthAdjust="spacingAndGlyphs">RGB Balance</text>
</svg>
<!-- p_table -->
<div class="abs" style="left:723px;top:728px;width:829.5px;height:33px;background:linear-gradient(#303030 0,#2c2c2c 48%,#161616 52%,#101010 100%)"></div>
<div class="abs" style="left:723px;top:760.7px;width:829.5px;height:31.3px;background:#424242"></div>
<div class="abs" style="left:723px;top:760.7px;width:23px;height:31.3px;background:linear-gradient(#2e2e2e,#262626);border-top:1px solid #383838"></div>
<div class="abs" style="left:723px;top:791.8px;width:829.5px;height:31.3px;background:#828282"></div>
<div class="abs" style="left:723px;top:791.8px;width:23px;height:31.3px;background:linear-gradient(#2e2e2e,#262626);border-top:1px solid #383838"></div>
<div class="abs" style="left:723px;top:822.8px;width:829.5px;height:31.3px;background:#424242"></div>
<div class="abs" style="left:723px;top:822.8px;width:23px;height:31.3px;background:linear-gradient(#2e2e2e,#262626);border-top:1px solid #383838"></div>
<div class="abs" style="left:723px;top:853.9px;width:829.5px;height:31.3px;background:#828282"></div>
<div class="abs" style="left:723px;top:853.9px;width:23px;height:31.3px;background:linear-gradient(#2e2e2e,#262626);border-top:1px solid #383838"></div>
<div class="abs" style="left:723px;top:884.9px;width:829.5px;height:31.3px;background:#424242"></div>
<div class="abs" style="left:723px;top:884.9px;width:23px;height:31.3px;background:linear-gradient(#2e2e2e,#262626);border-top:1px solid #383838"></div>
<div class="abs" style="left:723px;top:916.0px;width:829.5px;height:31.3px;background:#828282"></div>
<div class="abs" style="left:723px;top:916.0px;width:23px;height:31.3px;background:linear-gradient(#2e2e2e,#262626);border-top:1px solid #383838"></div>
<div class="abs" style="left:723px;top:728px;width:23px;height:33px;background:#000"></div>
<svg width="1912" height="1040">
<text x="937.50" y="751.00" font-size="17.50" text-anchor="start" fill="#fff" textLength="46.58" lengthAdjust="spacingAndGlyphs" stroke="#fff" stroke-width="0.4">20%</text>
<text x="1062.00" y="751.00" font-size="17.50" text-anchor="start" fill="#fff" textLength="46.58" lengthAdjust="spacingAndGlyphs" stroke="#fff" stroke-width="0.4">40%</text>
<text x="1186.70" y="751.00" font-size="17.50" text-anchor="start" fill="#fff" textLength="46.58" lengthAdjust="spacingAndGlyphs" stroke="#fff" stroke-width="0.4">60%</text>
<text x="1311.30" y="751.00" font-size="17.50" text-anchor="start" fill="#fff" textLength="46.58" lengthAdjust="spacingAndGlyphs" stroke="#fff" stroke-width="0.4">80%</text>
<text x="1436.00" y="751.00" font-size="17.50" text-anchor="start" fill="#fff" textLength="59.53" lengthAdjust="spacingAndGlyphs" stroke="#fff" stroke-width="0.4">100%</text>
<text x="753.50" y="783.60" font-size="17.50" text-anchor="start" fill="#f4f4f4" textLength="90.00" lengthAdjust="spacingAndGlyphs">x: CIE31</text>
<text x="937.50" y="783.60" font-size="17.50" text-anchor="start" fill="#f4f4f4" textLength="77.30" lengthAdjust="spacingAndGlyphs">0,3233</text>
<text x="1062.00" y="783.60" font-size="17.50" text-anchor="start" fill="#f4f4f4" textLength="77.30" lengthAdjust="spacingAndGlyphs">0,3430</text>
<text x="1186.70" y="783.60" font-size="17.50" text-anchor="start" fill="#f4f4f4" textLength="77.30" lengthAdjust="spacingAndGlyphs">0,3629</text>
<text x="1311.30" y="783.60" font-size="17.50" text-anchor="start" fill="#f4f4f4" textLength="77.30" lengthAdjust="spacingAndGlyphs">0,3825</text>
<text x="1436.00" y="783.60" font-size="17.50" text-anchor="start" fill="#f4f4f4" textLength="77.30" lengthAdjust="spacingAndGlyphs">0,4030</text>
<text x="753.50" y="814.65" font-size="17.50" text-anchor="start" fill="#f4f4f4" textLength="91.00" lengthAdjust="spacingAndGlyphs">y: CIE31</text>
<text x="937.50" y="814.65" font-size="17.50" text-anchor="start" fill="#f4f4f4" textLength="77.30" lengthAdjust="spacingAndGlyphs">0,3788</text>
<text x="1062.00" y="814.65" font-size="17.50" text-anchor="start" fill="#f4f4f4" textLength="77.30" lengthAdjust="spacingAndGlyphs">0,4155</text>
<text x="1186.70" y="814.65" font-size="17.50" text-anchor="start" fill="#f4f4f4" textLength="77.30" lengthAdjust="spacingAndGlyphs">0,4526</text>
<text x="1311.30" y="814.65" font-size="17.50" text-anchor="start" fill="#f4f4f4" textLength="77.30" lengthAdjust="spacingAndGlyphs">0,4890</text>
<text x="1436.00" y="814.65" font-size="17.50" text-anchor="start" fill="#f4f4f4" textLength="77.30" lengthAdjust="spacingAndGlyphs">0,5271</text>
<text x="753.50" y="845.70" font-size="17.50" text-anchor="start" fill="#f4f4f4" textLength="15.00" lengthAdjust="spacingAndGlyphs">Y</text>
<text x="937.50" y="845.70" font-size="17.50" text-anchor="start" fill="#f4f4f4" textLength="106.80" lengthAdjust="spacingAndGlyphs">170,3795</text>
<text x="1062.00" y="845.70" font-size="17.50" text-anchor="start" fill="#f4f4f4" textLength="106.80" lengthAdjust="spacingAndGlyphs">167,7860</text>
<text x="1186.70" y="845.70" font-size="17.50" text-anchor="start" fill="#f4f4f4" textLength="106.80" lengthAdjust="spacingAndGlyphs">165,6553</text>
<text x="1311.30" y="845.70" font-size="17.50" text-anchor="start" fill="#f4f4f4" textLength="106.80" lengthAdjust="spacingAndGlyphs">163,9198</text>
<text x="1436.00" y="845.70" font-size="17.50" text-anchor="start" fill="#f4f4f4" textLength="106.80" lengthAdjust="spacingAndGlyphs">161,8130</text>
<text x="753.50" y="876.75" font-size="17.50" text-anchor="start" fill="#f4f4f4" textLength="164.00" lengthAdjust="spacingAndGlyphs">Target x:CIE31</text>
<text x="937.50" y="876.75" font-size="17.50" text-anchor="start" fill="#f4f4f4" textLength="77.30" lengthAdjust="spacingAndGlyphs">0,3344</text>
<text x="1062.00" y="876.75" font-size="17.50" text-anchor="start" fill="#f4f4f4" textLength="77.30" lengthAdjust="spacingAndGlyphs">0,3564</text>
<text x="1186.70" y="876.75" font-size="17.50" text-anchor="start" fill="#f4f4f4" textLength="77.30" lengthAdjust="spacingAndGlyphs">0,3773</text>
<text x="1311.30" y="876.75" font-size="17.50" text-anchor="start" fill="#f4f4f4" textLength="77.30" lengthAdjust="spacingAndGlyphs">0,3969</text>
<text x="1436.00" y="876.75" font-size="17.50" text-anchor="start" fill="#f4f4f4" textLength="77.30" lengthAdjust="spacingAndGlyphs">0,4193</text>
<text x="753.50" y="907.80" font-size="17.50" text-anchor="start" fill="#f4f4f4" textLength="165.50" lengthAdjust="spacingAndGlyphs">Target y:CIE31</text>
<text x="937.50" y="907.80" font-size="17.50" text-anchor="start" fill="#f4f4f4" textLength="77.30" lengthAdjust="spacingAndGlyphs">0,3648</text>
<text x="1062.00" y="907.80" font-size="17.50" text-anchor="start" fill="#f4f4f4" textLength="77.30" lengthAdjust="spacingAndGlyphs">0,4013</text>
<text x="1186.70" y="907.80" font-size="17.50" text-anchor="start" fill="#f4f4f4" textLength="77.30" lengthAdjust="spacingAndGlyphs">0,4358</text>
<text x="1311.30" y="907.80" font-size="17.50" text-anchor="start" fill="#f4f4f4" textLength="77.30" lengthAdjust="spacingAndGlyphs">0,4682</text>
<text x="1436.00" y="907.80" font-size="17.50" text-anchor="start" fill="#f4f4f4" textLength="77.30" lengthAdjust="spacingAndGlyphs">0,5053</text>
<text x="753.50" y="938.85" font-size="17.50" text-anchor="start" fill="#f4f4f4" textLength="95.80" lengthAdjust="spacingAndGlyphs">Target Y</text>
<text x="937.50" y="938.85" font-size="17.50" text-anchor="start" fill="#f4f4f4" textLength="106.80" lengthAdjust="spacingAndGlyphs">161,4596</text>
<text x="1062.00" y="938.85" font-size="17.50" text-anchor="start" fill="#f4f4f4" textLength="106.80" lengthAdjust="spacingAndGlyphs">158,6255</text>
<text x="1186.70" y="938.85" font-size="17.50" text-anchor="start" fill="#f4f4f4" textLength="106.80" lengthAdjust="spacingAndGlyphs">156,4479</text>
<text x="1311.30" y="938.85" font-size="17.50" text-anchor="start" fill="#f4f4f4" textLength="106.80" lengthAdjust="spacingAndGlyphs">154,7389</text>
<text x="1436.00" y="938.85" font-size="17.50" text-anchor="start" fill="#f4f4f4" textLength="106.80" lengthAdjust="spacingAndGlyphs">153,0867</text>
</svg>
<!-- p_bottom -->
<div class="abs" style="left:0;top:978px;width:1912px;height:62px;background:linear-gradient(#4a4a4a,#3a3a3a 45%,#2a2a2a)"></div>
<div class="abs" style="left:0;top:978px;width:1912px;height:62px;background:linear-gradient(90deg,rgba(0,0,0,0) 1350px,rgba(0,0,0,.22) 1597px,rgba(0,0,0,.5) 1912px)"></div>
<div class="abs" style="left:0;top:978px;width:662px;height:62px;background:linear-gradient(#3a3a3a,#2c2c2c)"></div>
<div class="abs" style="left:1.5px;top:978px;width:44.5px;height:64px;border-radius:4px;background:linear-gradient(#929292,#787878 40%,#5c5c5c)"></div>
<div class="abs" style="left:16px;top:980px;width:15px;height:15px;border-radius:50%;background:linear-gradient(#484848,#8c8c8c)"></div>
<div class="abs" style="left:6.2px;top:1004.3px;width:35px;height:29.5px;border-radius:2.5px;background:#ffff00;box-shadow:0 0 0 0.6px #8a8a20"></div>
<div class="abs" style="left:52.2px;top:978px;width:149.6px;height:64px;border-radius:4px;background:linear-gradient(#929292,#7c7c7c 40%,#606060)"></div>
<div class="abs" style="left:57.3px;top:983.4px;width:140px;height:35.8px;border-radius:3px;background:#bfbfa5;box-shadow:inset 0 0 0 0.8px rgba(60,60,30,.45)"></div>
<div class="abs" style="left:204.3px;top:978px;width:149.6px;height:64px;border-radius:4px;background:linear-gradient(#929292,#7c7c7c 40%,#606060)"></div>
<div class="abs" style="left:209.4px;top:983.4px;width:140px;height:35.8px;border-radius:3px;background:#c0be87;box-shadow:inset 0 0 0 0.8px rgba(60,60,30,.45)"></div>
<div class="abs" style="left:356.4px;top:978px;width:149.6px;height:64px;border-radius:4px;background:linear-gradient(#929292,#7c7c7c 40%,#606060)"></div>
<div class="abs" style="left:361.5px;top:983.4px;width:140px;height:35.8px;border-radius:3px;background:#bfbd6b;box-shadow:inset 0 0 0 0.8px rgba(60,60,30,.45)"></div>
<div class="abs" style="left:508.5px;top:978px;width:149.6px;height:64px;border-radius:4px;background:linear-gradient(#929292,#7c7c7c 40%,#606060)"></div>
<div class="abs" style="left:513.6px;top:983.4px;width:140px;height:35.8px;border-radius:3px;background:#bfbd4a;box-shadow:inset 0 0 0 0.8px rgba(60,60,30,.45)"></div>
<div class="abs" style="left:660.6px;top:978px;width:149.6px;height:64px;border-radius:4px;background:linear-gradient(#1a1a1a,#262626 50%,#343434)"></div>
<div class="abs" style="left:665.7px;top:983.4px;width:140px;height:35.8px;border-radius:3px;background:#c4c000;box-shadow:inset 0 0 0 0.8px rgba(60,60,30,.45)"></div>
<svg width="1912" height="1040">
<path d="M19.3 989.5H27.7L23.5 984.8Z" fill="#1a1a1a"/>
<text x="127.00" y="1033.70" font-size="10.60" text-anchor="middle" fill="#2c2c2c" font-weight="bold">20%</text>
<text x="279.10" y="1033.70" font-size="10.60" text-anchor="middle" fill="#2c2c2c" font-weight="bold">40%</text>
<text x="431.20" y="1033.70" font-size="10.60" text-anchor="middle" fill="#2c2c2c" font-weight="bold">60%</text>
<text x="583.30" y="1033.70" font-size="10.60" text-anchor="middle" fill="#2c2c2c" font-weight="bold">80%</text>
<text x="735.40" y="1033.70" font-size="10.60" text-anchor="middle" fill="#fff" font-weight="bold">100%</text>
</svg>
<div class="abs" style="left:1597px;top:978px;width:48px;height:18.5px;border-radius:4px 4px 0 0;background:linear-gradient(#8e8e8e,#767676)"></div>
<div class="abs" style="left:1597px;top:997.5px;width:48px;height:44px;background:linear-gradient(#868686,#6a6a6a 50%,#565656)"></div>
<div class="abs" style="left:1613.5px;top:980px;width:15px;height:15px;border-radius:50%;background:linear-gradient(#505050,#8c8c8c)"></div>
<div class="abs" style="left:1646.0px;top:978px;width:44.3px;height:29.7px;border-radius:3px 3px 0 0;background:linear-gradient(#8e8e8e,#7a7a7a 45%,#5e5e5e)"></div>
<div class="abs" style="left:1658.4px;top:983px;width:20px;height:20px;border-radius:50%;background:linear-gradient(#5a5a5a,#909090)"></div>
<div class="abs" style="left:1692.5px;top:978px;width:44.3px;height:29.7px;border-radius:3px 3px 0 0;background:linear-gradient(#8e8e8e,#7a7a7a 45%,#5e5e5e)"></div>
<div class="abs" style="left:1704.9px;top:983px;width:20px;height:20px;border-radius:50%;background:linear-gradient(#5a5a5a,#909090)"></div>
<div class="abs" style="left:1737.7px;top:978px;width:44.3px;height:29.7px;border-radius:3px 3px 0 0;background:linear-gradient(#8e8e8e,#7a7a7a 45%,#5e5e5e)"></div>
<div class="abs" style="left:1750.1px;top:983px;width:20px;height:20px;border-radius:50%;background:linear-gradient(#5a5a5a,#909090)"></div>
<div class="abs" style="left:1782.8px;top:978px;width:44.3px;height:29.7px;border-radius:3px 3px 0 0;background:linear-gradient(#8e8e8e,#7a7a7a 45%,#5e5e5e)"></div>
<div class="abs" style="left:1795.2px;top:983px;width:20px;height:20px;border-radius:50%;background:linear-gradient(#5a5a5a,#909090)"></div>
<div class="abs" style="left:1827.8px;top:978px;width:44.3px;height:29.7px;border-radius:3px 3px 0 0;background:linear-gradient(#8e8e8e,#7a7a7a 45%,#5e5e5e)"></div>
<div class="abs" style="left:1840.2px;top:983px;width:20px;height:20px;border-radius:50%;background:linear-gradient(#5a5a5a,#909090)"></div>
<div class="abs" style="left:1872.5px;top:978px;width:40px;height:30px;background:linear-gradient(#191919,#282828)"></div>
<div class="abs" style="left:1886px;top:983px;width:20px;height:20px;border-radius:50%;background:linear-gradient(#2a2a2a,#353535)"></div>
<div class="abs" style="left:1646px;top:1009px;width:136px;height:33px;border-radius:3px 0 0 0;background:linear-gradient(#8e8e8e,#7a7a7a 45%,#5e5e5e)"></div>
<div class="abs" style="left:1783px;top:1009px;width:131px;height:33px;background:linear-gradient(#8e8e8e,#7a7a7a 45%,#5e5e5e)"></div>
<div class="abs" style="left:1667px;top:1014px;width:20px;height:20px;border-radius:50%;background:linear-gradient(#5c5c5c,#8e8e8e)"></div>
<div class="abs" style="left:1880px;top:1014px;width:20px;height:20px;border-radius:50%;background:linear-gradient(#5c5c5c,#8e8e8e)"></div>
<svg width="1912" height="1040">
<path d="M1616.8 989.5H1625.2L1621 984.8Z" fill="#1a1a1a"/>
<rect x="1605.8" y="1003" width="29.5" height="29" rx="4" fill="#8a8a8a" stroke="#0a0a0a" stroke-width="2"/>
<rect x="1607" y="1017.5" width="27" height="13.5" rx="2" fill="#6a6a6a"/>
<rect x="1613.5" y="1010.5" width="14" height="14" fill="#000"/>
<rect x="1665" y="989" width="8" height="8" fill="#1c1c1c"/>
<path d="M1711.5 988V998L1720 993Z" fill="#1c1c1c"/>
<path d="M1757 988.5H1754.8V997.5H1757M1763.5 988.5H1765.7V997.5H1763.5" stroke="#1c1c1c" stroke-width="1.5" fill="none"/><path d="M1757.5 993H1759M1761.2 993H1762.7" stroke="#1c1c1c" stroke-width="1.3"/>
<path d="M1805.3 993C1803.8 990.3 1799.8 990.3 1799.8 993S1803.8 995.700 1805.300 993S1810.8 990.3 1810.8 993S1806.8 995.700 1805.300 993Z" stroke="#1c1c1c" stroke-width="1.4" fill="none"/>
<path d="M1845.5 991.5A5 5 0 0 1 1854 990.5M1855 994.5A5 5 0 0 1 1846.500 995.500" stroke="#1c1c1c" stroke-width="1.8" fill="none"/><path d="M1855.5 987.5V992H1851Z M1845 998.5V994H1849.500Z" fill="#1c1c1c"/>
<path d="M1677 1019.5L1673 1024L1677 1028.5M1682 1019.5L1678 1024L1682 1028.5" stroke="#2a2a2a" stroke-width="1.6" fill="none"/>
<path d="M1886 1019.5L1890 1024L1886 1028.5M1891 1019.5L1895 1024L1891 1028.500" stroke="#2a2a2a" stroke-width="1.6" fill="none"/>
<text x="1703.00" y="1032.50" font-size="24.50" text-anchor="start" fill="#303030" textLength="51.00" lengthAdjust="spacingAndGlyphs" stroke="#303030" stroke-width="0.5">Back</text>
<text x="1810.00" y="1032.50" font-size="24.50" text-anchor="start" fill="#303030" textLength="52.00" lengthAdjust="spacingAndGlyphs" stroke="#303030" stroke-width="0.5">Next</text>
</svg>
</body></html>
